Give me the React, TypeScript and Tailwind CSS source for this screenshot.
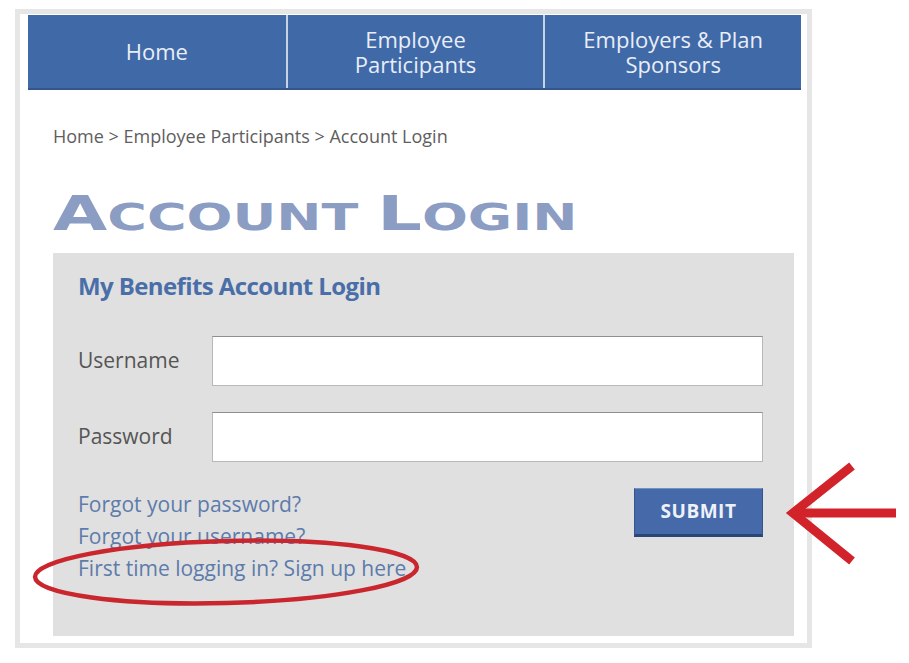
import React from 'react';

const openSans = { fontFamily: '"Open Sans", "Liberation Sans", sans-serif' };

function NavItem({ lines, first }: { lines: string[]; first?: boolean }) {
  return (
    <div
      className={`flex flex-col items-center justify-center text-[22px] leading-[25px] text-[#e9eef7] ${
        first ? '' : 'border-l-[2px] border-[#c7d2e4]'
      }`}
    >
      {lines.map((l) => (
        <span key={l}>{l}</span>
      ))}
    </div>
  );
}

function Field({ label, type }: { label: string; type: string }) {
  return (
    <div className="flex items-center">
      <label className="w-[134px] text-[21px] text-[#555]">{label}</label>
      <input
        type={type}
        className="h-[50px] flex-1 border border-[#b8b8b8] border-t-[#8f8f8f] bg-white px-2 outline-none"
      />
    </div>
  );
}

export default function App() {
  return (
    <div className="relative h-[663px] w-[909px] overflow-hidden bg-white" style={openSans}>
      <div className="ml-[15px] mt-[9px] h-[639px] w-[797px] border-[5px] border-[#e6e6e6] bg-white">
        {/* top nav */}
        <nav className="ml-[8px] mt-[1px] grid h-[75px] w-[773px] grid-cols-3 border-b-[2px] border-[#34568c] bg-[#4069a8]">
          <NavItem lines={['Home']} first />
          <NavItem lines={['Employee', 'Participants']} />
          <NavItem lines={['Employers & Plan', 'Sponsors']} />
        </nav>

        <div className="pl-[33px] pr-[12px]">
          <div className="mt-[34px] text-[18px] leading-[24px] text-[#5e5e5e]">
            Home &gt; Employee Participants &gt; Account Login
          </div>

          <h1
            className="mt-[41px] h-[48px] whitespace-nowrap leading-[48px] font-bold text-[#8c9dc4]"
            style={{ fontFamily: '"DejaVu Sans", sans-serif' }}
          >
            <span className="inline-block origin-left scale-x-[1.46]">
              <span className="text-[48px]">A</span>
              <span className="text-[37px]">CCOUNT </span>
              <span className="text-[48px]">L</span>
              <span className="text-[37px]">OGIN</span>
            </span>
          </h1>

          {/* login panel */}
          <div className="mt-[16px] h-[383px] w-[741px] bg-[#e0e0e0] pl-[25px] pr-[31px] pt-[18px]">
            <h2 className="text-[24px] font-bold leading-[30px] tracking-[-0.6px] text-[#4a6ea8]">
              My Benefits Account Login
            </h2>

            <div className="mt-[35px] flex flex-col gap-[26px]">
              <Field label="Username" type="text" />
              <Field label="Password" type="password" />
            </div>

            <div className="mt-[26px] flex items-start justify-between">
              <div className="flex flex-col text-[21px] leading-[32px] text-[#5d7bab]">
                <a href="#">Forgot your password?</a>
                <a href="#">Forgot your username?</a>
                <a href="#">First time logging in? Sign up here</a>
              </div>
              <button className="h-[49px] w-[129px] border border-[#34568f] border-b-[3px] border-b-[#2a4677] border-t-[#7390c2] bg-[#4569a9] text-[19px] font-bold tracking-[0.5px] text-[#eef2f8]">
                SUBMIT
              </button>
            </div>
          </div>
        </div>
      </div>

      {/* annotations */}
      <svg className="absolute left-0 top-0" width="909" height="663" viewBox="0 0 909 663" fill="none">
        <ellipse
          cx="226"
          cy="572"
          rx="191"
          ry="31"
          stroke="#c9262e"
          strokeWidth="4.5"
          transform="rotate(-1.5 226 572)"
        />
        <line x1="792" y1="513" x2="896" y2="513" stroke="#d2232a" strokeWidth="9" />
        <polyline points="852,466 793,513 852,561" stroke="#d2232a" strokeWidth="9" strokeLinejoin="miter" />
      </svg>
    </div>
  );
}
